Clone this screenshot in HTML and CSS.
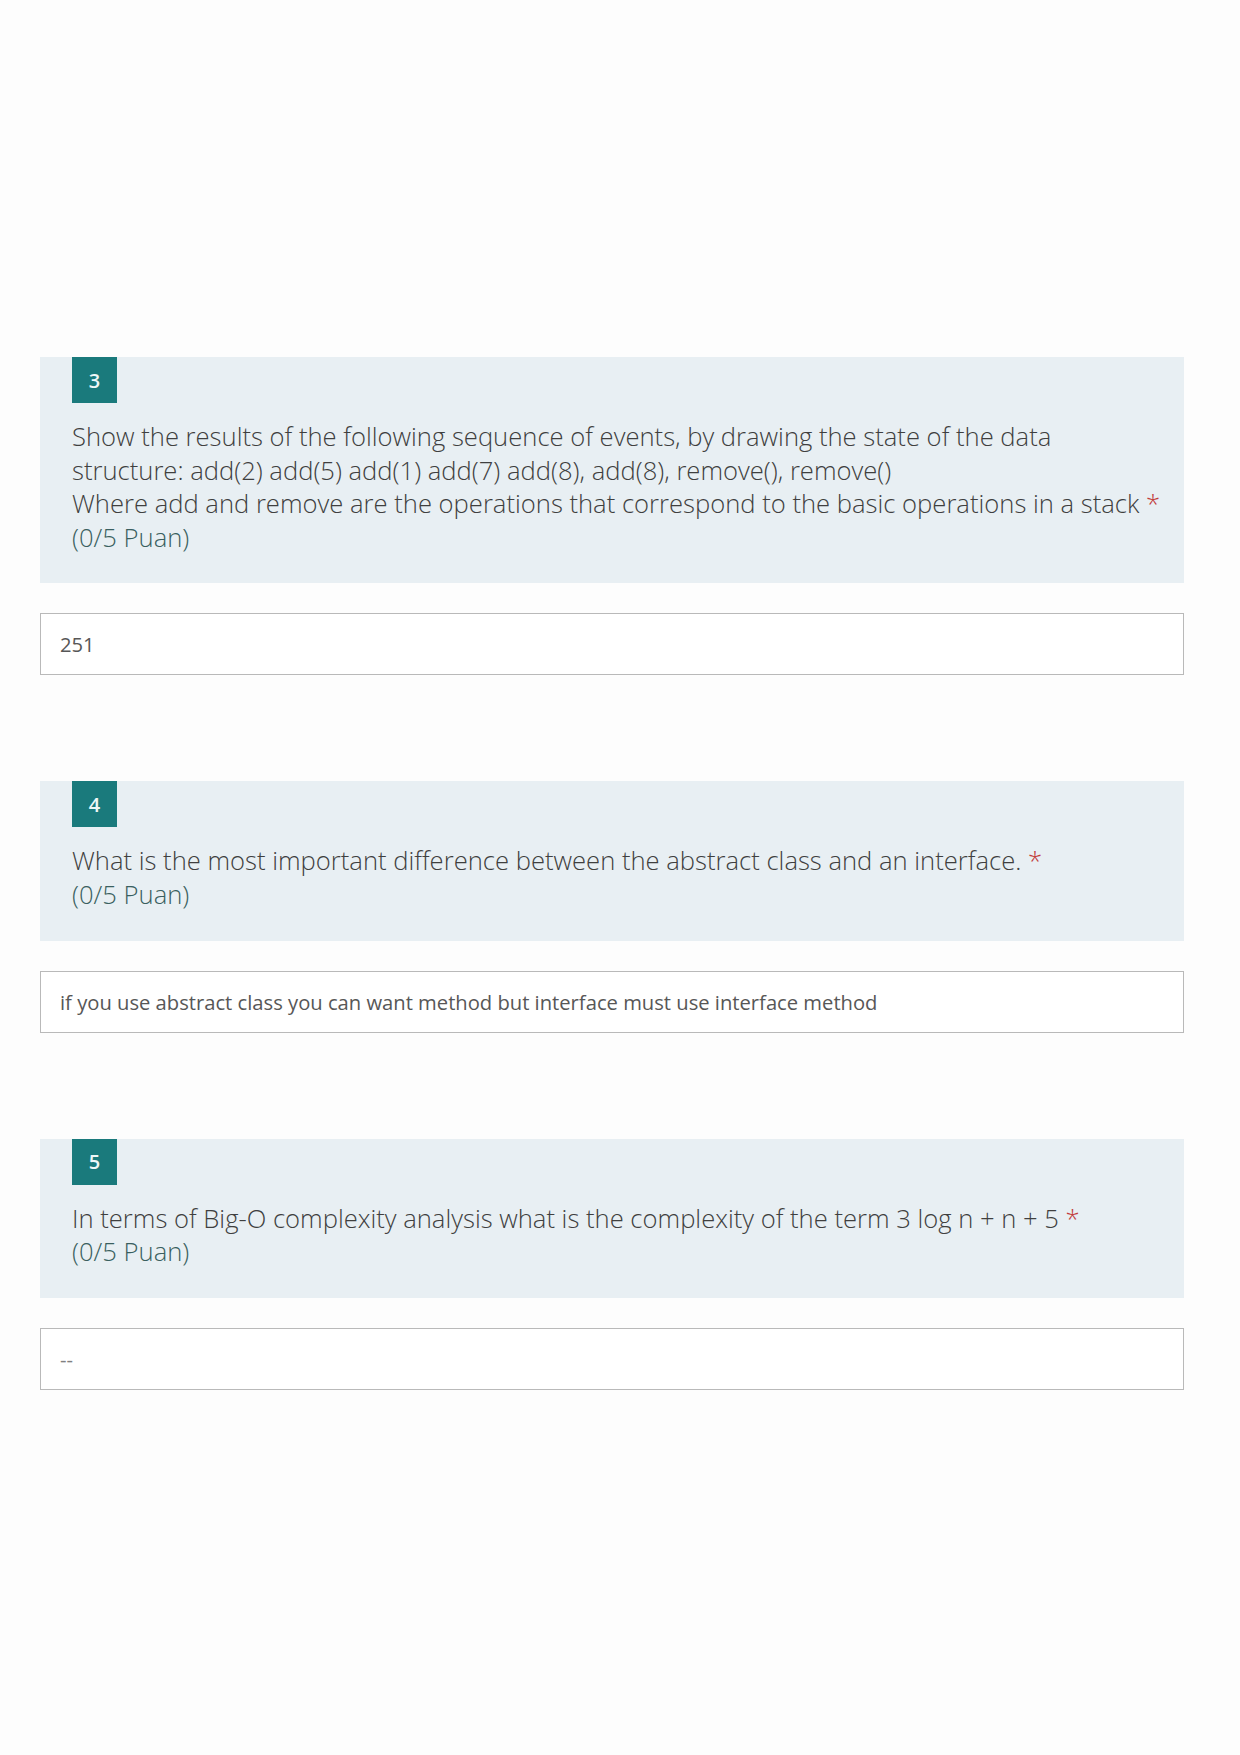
FILE: index.html
```html
<!DOCTYPE html>
<html lang="en">
<head>
<meta charset="utf-8">
<title>Quiz</title>
<link rel="stylesheet" href="styles.css">
</head>
<body>
<main class="page">
  <section class="question">
    <div class="card">
      <div class="badge">3</div>
      <div class="q-text">
        Show the results of the following sequence of events, by drawing the state of the data<br>
        structure: add(2) add(5) add(1) add(7) add(8), add(8), remove(), remove()<br>
        Where add and remove are the operations that correspond to the basic operations in a stack&nbsp;<span class="req">*</span><br>
        <span class="points">(0/5 Puan)</span>
      </div>
    </div>
    <div class="answer">251</div>
  </section>

  <section class="question">
    <div class="card">
      <div class="badge">4</div>
      <div class="q-text">
        What is the most important difference between the abstract class and an interface.&nbsp;<span class="req">*</span><br>
        <span class="points">(0/5 Puan)</span>
      </div>
    </div>
    <div class="answer">if you use abstract class you can want method but interface must use interface method</div>
  </section>

  <section class="question">
    <div class="card">
      <div class="badge">5</div>
      <div class="q-text">
        In terms of Big-O complexity analysis what is the complexity of the term 3 log n + n + 5&nbsp;<span class="req">*</span><br>
        <span class="points">(0/5 Puan)</span>
      </div>
    </div>
    <div class="answer answer-muted">--</div>
  </section>
</main>
</body>
</html>
```

FILE: styles.css
```css
html, body {
  margin: 0;
  padding: 0;
  background: #fdfdfd;
}

body {
  font-family: "Open Sans", "Noto Sans", "Liberation Sans", sans-serif;
  color: #424242;
}

.page {
  width: 1144px;
  padding: 357px 0 0 40px;
  display: flex;
  flex-direction: column;
  gap: 106px;
}

.question {
  display: flex;
  flex-direction: column;
  gap: 30px;
}

.card {
  background: #e8eff3;
  padding: 0 24px 29px 32px;
  display: flex;
  flex-direction: column;
  align-items: flex-start;
  gap: 17px;
}

.badge {
  width: 45px;
  height: 46px;
  background: #1a7a7c;
  color: #eef7f7;
  font-size: 20px;
  font-weight: 600;
  display: flex;
  align-items: center;
  justify-content: center;
}

.q-text {
  font-size: 25.6px;
  font-weight: 300;
  line-height: 33.6px;
  color: #3f3f3f;
  white-space: nowrap;
}

.req {
  color: #c23b3b;
}

.points {
  color: #3a5f60;
}

.answer {
  height: 60px;
  border: 1px solid #b9b9b9;
  background: #ffffff;
  box-sizing: content-box;
  padding: 0 19px;
  display: flex;
  align-items: center;
  font-size: 20.2px;
  color: #575757;
}

.answer-muted {
  color: #808080;
}
```
